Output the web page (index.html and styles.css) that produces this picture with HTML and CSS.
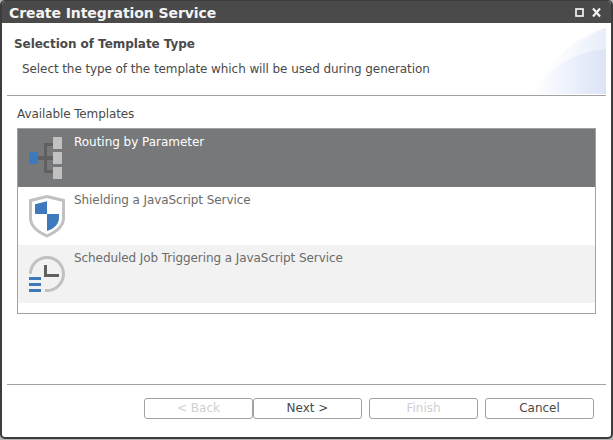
FILE: index.html
```html
<!DOCTYPE html>
<html lang="en">
<head>
<meta charset="utf-8">
<title>Create Integration Service</title>
<link rel="stylesheet" href="styles.css">
</head>
<body>
<main class="dialog">
  <header class="titlebar">
    <h1 class="title">Create Integration Service</h1>
    <svg class="controls" width="28" height="12" viewBox="0 0 28 12">
      <rect x="1" y="2" width="7" height="7" fill="none" stroke="#f2f2f2" stroke-width="1.7"/>
      <path d="M18 1.500L25 9.500M25 1.500L18 9.500" stroke="#f2f2f2" stroke-width="2.2"/>
    </svg>
  </header>
  <section class="banner">
    <div class="banner-text">
      <h2 class="heading">Selection of Template Type</h2>
      <p class="description">Select the type of the template which will be used during generation</p>
    </div>
    <svg class="wave" width="74" height="66" viewBox="0 0 74 66">
      <defs>
        <linearGradient id="a"><stop offset="0" stop-color="#fff"/><stop offset="1" stop-color="#f1f4fc"/></linearGradient>
        <linearGradient id="b"><stop offset="0" stop-color="#fff"/><stop offset="1" stop-color="#e7edf9"/></linearGradient>
        <linearGradient id="c"><stop offset="0" stop-color="#fff"/><stop offset=".5" stop-color="#edf2fb"/><stop offset="1" stop-color="#dbe3f6"/></linearGradient>
      </defs>
      <path d="M0 66C14 38 42 8 74 0V66Z" fill="url(#a)"/>
      <path d="M19 66C29 35 46 10 74 0V66Z" fill="url(#b)"/>
      <path d="M0 66C17 40 43 23 74 21.500V66Z" fill="url(#c)"/>
    </svg>
  </section>
  <section class="content">
    <div class="label">Available Templates</div>
    <ul class="templates">
      <li class="template selected">
        <svg class="icon" width="38" height="44" viewBox="0 0 38 44">
          <path d="M25 8.500H17.500V35.500H25" fill="none" stroke="#606060" stroke-width="3"/>
          <path d="M9 22H25" stroke="#606060" stroke-width="4"/>
          <path d="M1 16h9v12H1z" fill="#3e7abb"/>
          <path d="M25 1h9v12h-9zM25 16h9v12h-9zM25 31h9v12h-9z" fill="#c1c1c1"/>
        </svg>
        <span class="name routing">Routing by Parameter</span>
      </li>
      <li class="template">
        <svg class="icon" width="38" height="44" viewBox="0 0 38 44">
          <path d="M19 2.500L35.500 6.500V24C35.500 32 28 38 19 42C10 38 2.500 32 2.500 24V6.500Z" fill="#fff" stroke="#c1c1c1" stroke-width="3"/>
          <path d="M19 7.200V20H31V24C31 30 26 35 19 37V20H7V10.200Z" fill="#3e7abb"/>
        </svg>
        <span class="name">Shielding a JavaScript Service</span>
      </li>
      <li class="template">
        <svg class="icon" width="38" height="44" viewBox="0 0 38 44">
          <path d="M2.500 21.700A16.500 16.500 0 1 1 17 38.400" fill="none" stroke="#c1c1c1" stroke-width="3"/>
          <path d="M17.500 13V23.500H31" fill="none" stroke="#606060" stroke-width="3"/>
          <path d="M1 25h12v3H1zM1 31h12v3H1zM1 37h12v3H1z" fill="#3e7abb"/>
        </svg>
        <span class="name">Scheduled Job Triggering a JavaScript Service</span>
      </li>
    </ul>
  </section>
  <footer class="actions">
    <button class="button" disabled>&lt; Back</button>
    <button class="button next">Next &gt;</button>
    <button class="button" disabled>Finish</button>
    <button class="button">Cancel</button>
  </footer>
</main>
</body>
</html>
```
FILE: styles.css
```css
* { box-sizing: border-box; }
body {
  margin: 0;
  width: 613px;
  height: 440px;
  overflow: hidden;
  background: #b5b5b5;
  color: #4a4a4a;
  font: 12px/16px "DejaVu Sans", Verdana, sans-serif;
}
h1, h2, p, ul { margin: 0; padding: 0; }
svg { display: block; flex: none; }
.dialog {
  display: flex;
  flex-direction: column;
  height: 439px;
  border: 2px solid #3c3c3c;
  border-top-width: 1px;
  border-radius: 5px;
  background: #fff;
  overflow: hidden;
}
.titlebar {
  display: flex;
  align-items: center;
  justify-content: space-between;
  height: 22px;
  padding: 2px 8px 0 7px;
  background: #4a4a4a;
}
.title { color: #f4f4f4; font-size: 14px; line-height: 18px; letter-spacing: -0.07px; white-space: nowrap; }
.banner {
  display: flex;
  justify-content: space-between;
  height: 73px;
  margin: 0 5px;
  padding-top: 5px;
  border-bottom: 1px solid #a2a2a2;
}
.banner-text { padding: 8px 0 0 7px; white-space: nowrap; }
.heading { font-size: 12px; line-height: 16px; letter-spacing: -0.04px; }
.description { padding: 9px 0 0 8px; letter-spacing: -0.085px; }
.content { flex: 1; padding: 10px 15px 0; }
.label { height: 22px; letter-spacing: -0.1px; }
.templates {
  height: 186px;
  border: 1px solid #a2a2a2;
  list-style: none;
}
.template {
  display: flex;
  height: 58px;
  padding-left: 10px;
  color: #6b6b6b;
  white-space: nowrap;
}
.template:nth-child(3) { background: #f2f2f2; }
.template.selected { background: #777879; color: #fff; }
.icon { margin: 7px 8px 0 0; }
.name { padding-top: 5px; letter-spacing: -0.075px; }
.routing { letter-spacing: -0.03px; }
.actions {
  display: flex;
  gap: 7px;
  height: 53px;
  margin: 0 5px;
  padding: 13px 0 0 137px;
  border-top: 1px solid #a2a2a2;
}
.button {
  width: 109px;
  height: 21px;
  padding: 0;
  border: 1px solid #a2a2a2;
  border-radius: 3px;
  background: #fff;
  color: #4a4a4a;
  font: inherit;
  line-height: 19px;
}
.button:disabled { color: #cfcfcf; }
.next { margin-left: -7px; }
```
